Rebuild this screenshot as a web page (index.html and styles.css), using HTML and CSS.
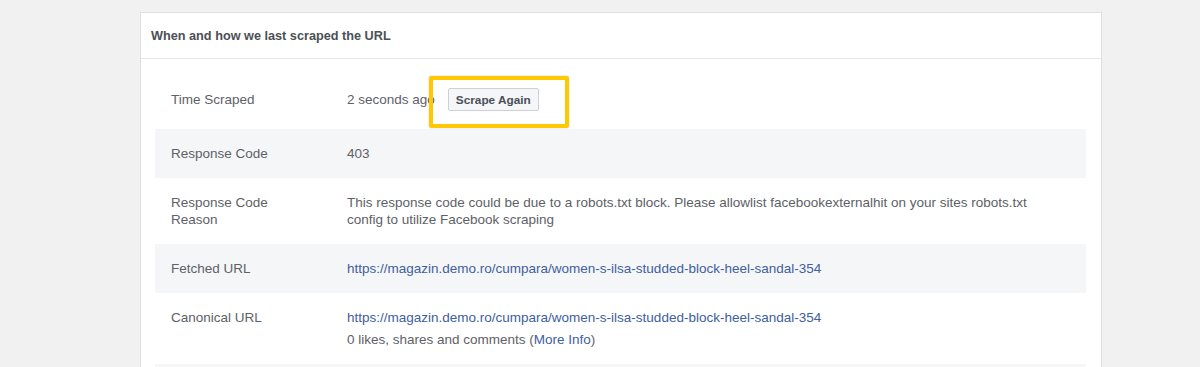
FILE: index.html
```html
<!DOCTYPE html>
<html lang="en">

<head>
    <meta charset="UTF-8">
    <meta name="viewport" content="width=device-width, initial-scale=1.0">
    <title>Sharing Debugger</title>
    <link rel="stylesheet" href="styles.css">
</head>

<body>
    <div class="card">
        <div class="cardHeader">When and how we last scraped the URL</div>
        <div class="cardBody">
            <div class="row first">
                <div class="label">Time Scraped</div>
                <div class="value timeValue">
                    <span>2 seconds ago</span>
                    <button class="scrapeBtn">Scrape Again</button>
                    <div class="highlight"></div>
                </div>
            </div>
            <div class="row alt">
                <div class="label">Response Code</div>
                <div class="value">403</div>
            </div>
            <div class="row">
                <div class="label">Response Code<br>Reason</div>
                <div class="value">This response code could be due to a robots.txt block. Please allowlist facebookexternalhit on your sites robots.txt config to utilize Facebook scraping</div>
            </div>
            <div class="row alt">
                <div class="label">Fetched URL</div>
                <div class="value"><a href="#">https://magazin.demo.ro/cumpara/women-s-ilsa-studded-block-heel-sandal-354</a></div>
            </div>
            <div class="row">
                <div class="label">Canonical URL</div>
                <div class="value">
                    <a href="#">https://magazin.demo.ro/cumpara/women-s-ilsa-studded-block-heel-sandal-354</a>
                    <div class="subLine">0 likes, shares and comments (<a href="#">More Info</a>)</div>
                </div>
            </div>
            <div class="row alt empty"></div>
        </div>
    </div>
</body>

</html>
```

FILE: styles.css
```css
* {
  margin: 0;
  padding: 0;
  box-sizing: border-box;
  font-family: "Liberation Sans", Arial, sans-serif;
}
html,
body {
  width: 100%;
  height: 100%;
  overflow: hidden;
  background-color: #f1f1f1;
}
body {
  padding: 12px 98px 0 140px;
}

.card {
  width: 962px;
  background-color: white;
  border: 1px solid #dddfe2;
  border-bottom: none;
}
.card .cardHeader {
  height: 46px;
  padding: 0 10px;
  display: flex;
  align-items: center;
  font-size: 12.7px;
  font-weight: bold;
  color: #4b4f56;
  border-bottom: 1px solid #e5e5e5;
}
.card .cardBody {
  padding: 11px 15px 0 14px;
}
.card .row {
  display: flex;
  padding: 16px 0;
  font-size: 13.5px;
  line-height: 17px;
  color: #5d6167;
}
.card .row.first {
  align-items: center;
}
.card .row.alt {
  background-color: #f5f6f7;
}
.card .row.empty {
  height: 48px;
}
.card .row .label {
  width: 192px;
  padding-left: 16px;
  flex-shrink: 0;
}
.card .row .value {
  flex: 1;
  padding-right: 40px;
}
.card .row a {
  color: #40609e;
  text-decoration: none;
}
.card .row .subLine {
  margin-top: 5px;
}

.card .row .timeValue {
  position: relative;
  display: flex;
  align-items: center;
  gap: 13px;
  height: 27px;
}
.scrapeBtn {
  height: 23px;
  padding: 0 7px;
  font-size: 11.8px;
  font-weight: bold;
  color: #4b4f56;
  background-color: #f5f6f7;
  border: 1px solid #ced0d4;
  border-radius: 2px;
}
.highlight {
  position: absolute;
  left: 82px;
  top: -10px;
  width: 140px;
  height: 52px;
  border: 4px solid #ffc800;
  border-radius: 2px;
  box-shadow: 0 0 2px rgba(0, 0, 0, 0.2);
}
```
